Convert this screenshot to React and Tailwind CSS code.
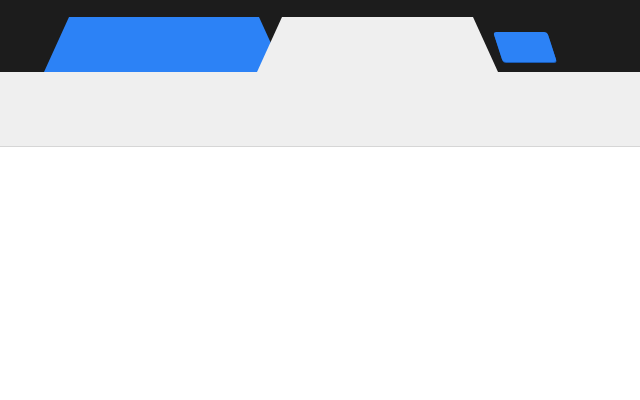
export default function App() {
  return (
    <div className="w-[640px] h-[400px] bg-white">
      {/* Tab strip */}
      <div className="h-[72px] bg-[#1c1c1c] flex items-end pl-[44px]">
        <div className="w-[240px] h-[55px] bg-[#2c82f6] [clip-path:polygon(25px_0,215px_0,100%_100%,0_100%)]" />
        <div className="-ml-[27px] w-[241px] h-[55px] bg-[#efefef] [clip-path:polygon(25px_0,216px_0,100%_100%,0_100%)]" />
        <button className="ml-0 mb-[10px] w-[54px] h-[30px] rounded-[3px] bg-[#2c82f6] skew-x-[18deg] shadow-[0_1px_0_#1a5bb5]" />
      </div>
      {/* Toolbar */}
      <div className="h-[75px] bg-[#efefef] border-b border-[#d6d6d6]" />
    </div>
  )
}
